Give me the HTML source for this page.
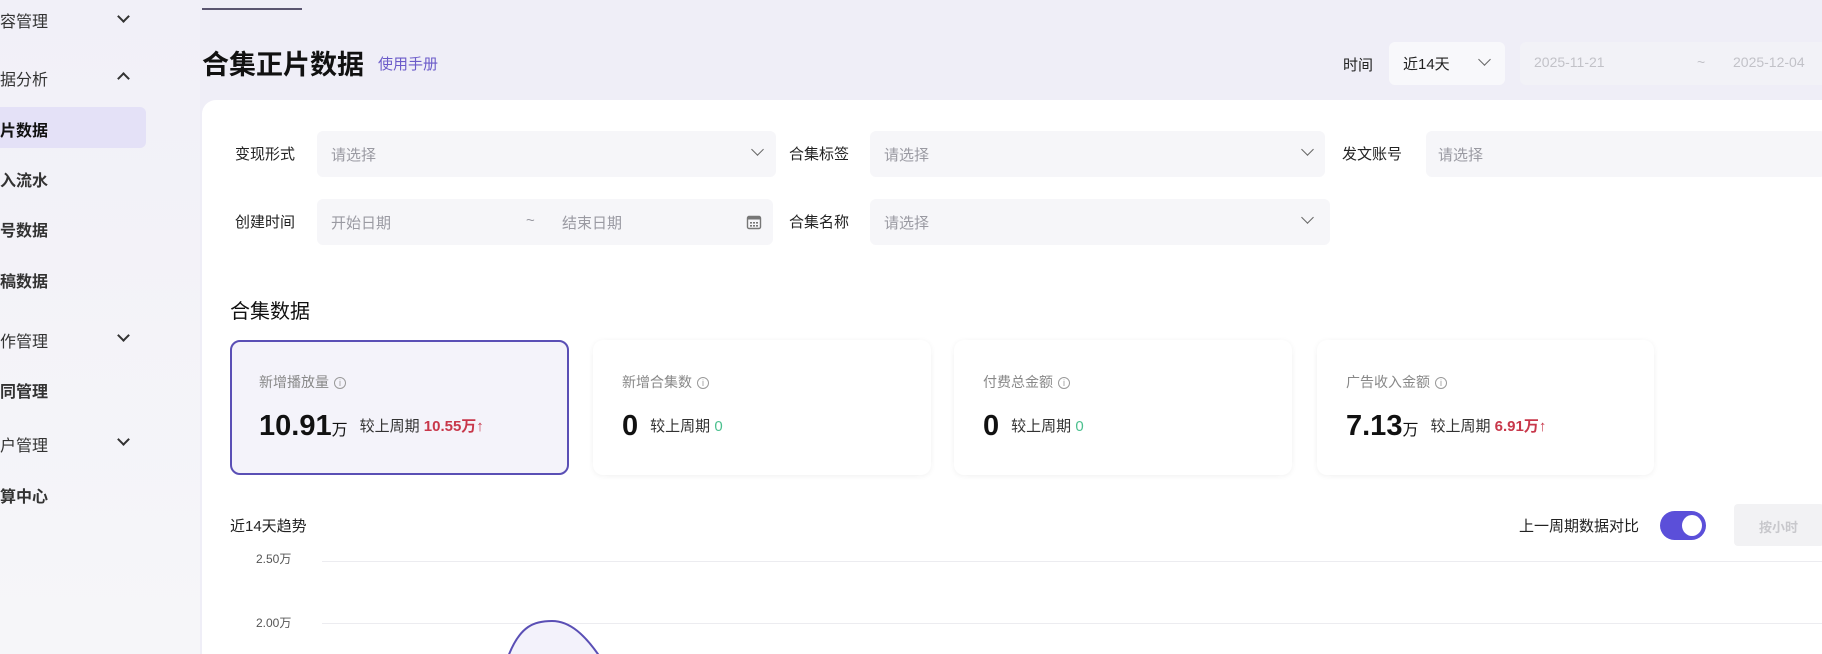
<!DOCTYPE html>
<html><head><meta charset="utf-8"><style>
*{margin:0;padding:0;box-sizing:border-box}
html,body{width:1822px;height:654px;overflow:hidden}
body{background:#efeef7;font-family:"Liberation Sans","Noto Sans CJK SC",sans-serif;color:#1d1d22;position:relative}
.a{position:absolute;white-space:nowrap}
.side{position:absolute;left:0;top:0;width:200px;height:654px;background:linear-gradient(#f1f0f8,#f6f6f9)}
.si{position:absolute;left:0;font-size:16px;color:#333}
.chev{position:absolute;left:119px;width:9px;height:9px;border-right:2px solid #333;border-bottom:2px solid #333;transform:rotate(45deg)}
.card{position:absolute;left:202px;top:100px;width:1620px;height:554px;background:#fff;border-radius:14px 0 0 0}
.lbl{font-size:15px;color:#222}
.sel{position:absolute;background:#f6f6f9;border-radius:6px;height:46px}
.ph{position:absolute;font-size:15px;color:#9a9aa2;top:13px}
.dd{position:absolute;width:9px;height:9px;border-right:1.6px solid #666;border-bottom:1.6px solid #666;transform:rotate(45deg);top:15px}
.kc{position:absolute;top:340px;height:135px;background:#fff;border-radius:10px;box-shadow:0 1px 6px rgba(0,0,0,.06)}
.kl{position:absolute;left:29px;top:32px;font-size:14px;color:#888}
.kl i{display:inline-block;width:12px;height:12px;border:1px solid #999;border-radius:50%;font-size:9px;font-style:normal;text-align:center;line-height:11px;margin-left:5px;vertical-align:1px;color:#999}
.kv{position:absolute;left:29px;top:70px;font-size:29px;font-weight:bold;color:#111}
.kv small{font-size:16px;font-weight:normal}
.kv span{font-size:15px;font-weight:normal;color:#333;margin-left:12px;vertical-align:4px}
.kv b{font-size:15px}
</style></head><body>
<div class="side">
<div class="si" style="top:8px">容管理</div><div class="chev" style="top:12px"></div>
<div class="si" style="top:66px">据分析</div><div class="chev" style="top:74px;transform:rotate(225deg)"></div>
<div style="position:absolute;left:0;top:107px;width:146px;height:41px;background:#e4e1f7;border-radius:0 6px 6px 0"></div>
<div class="si" style="top:117px;font-weight:bold;color:#111">片数据</div>
<div class="si" style="top:167px;font-weight:bold">入流水</div>
<div class="si" style="top:217px;font-weight:bold">号数据</div>
<div class="si" style="top:268px;font-weight:bold">稿数据</div>
<div class="si" style="top:328px">作管理</div><div class="chev" style="top:331px"></div>
<div class="si" style="top:378px;font-weight:bold">同管理</div>
<div class="si" style="top:432px">户管理</div><div class="chev" style="top:435px"></div>
<div class="si" style="top:483px;font-weight:bold">算中心</div>
</div>
<div class="a" style="left:202px;top:8px;width:100px;height:2px;background:#5a5570"></div>
<div class="a" style="left:202px;top:43px;font-size:27px;font-weight:bold;color:#111">合集正片数据</div>
<div class="a" style="left:378px;top:53px;font-size:15px;color:#6b5bc9">使用手册</div>
<div class="a lbl" style="left:1343px;top:54px">时间</div>
<div class="sel" style="left:1389px;top:42px;width:116px;height:43px;background:#f8f8fb"><div class="a" style="left:14px;top:11px;font-size:15px;color:#222">近14天</div><div class="dd" style="left:91px;top:13px"></div></div>
<div class="sel" style="left:1520px;top:42px;width:310px;height:43px;background:#f2f2f7"><div class="a" style="left:14px;top:12px;font-size:14px;color:#c2c2c8">2025-11-21</div><div class="a" style="left:177px;top:12px;font-size:14px;color:#c2c2c8">~</div><div class="a" style="left:213px;top:12px;font-size:14px;color:#c2c2c8">2025-12-04</div></div>
<div class="card"></div>
<div class="a lbl" style="left:235px;top:143px">变现形式</div>
<div class="sel" style="left:317px;top:131px;width:459px"><div class="ph" style="left:14px">请选择</div><div class="dd" style="left:436px;top:14px"></div></div>
<div class="a lbl" style="left:789px;top:143px">合集标签</div>
<div class="sel" style="left:870px;top:131px;width:455px"><div class="ph" style="left:14px">请选择</div><div class="dd" style="left:433px;top:14px"></div></div>
<div class="a lbl" style="left:1342px;top:143px">发文账号</div>
<div class="sel" style="left:1426px;top:131px;width:400px"><div class="ph" style="left:12px">请选择</div></div>
<div class="a lbl" style="left:235px;top:211px">创建时间</div>
<div class="sel" style="left:317px;top:199px;width:456px"><div class="ph" style="left:14px">开始日期</div><div class="ph" style="left:209px">~</div><div class="ph" style="left:245px">结束日期</div>
<svg class="a" style="left:429px;top:15px" width="16" height="16" viewBox="0 0 16 16"><rect x="1.5" y="2.5" width="13" height="12" rx="1.5" fill="none" stroke="#777" stroke-width="1.4"/><rect x="1.5" y="2.5" width="13" height="3" fill="#777"/><g fill="#777"><rect x="4" y="8" width="2" height="1.6"/><rect x="7" y="8" width="2" height="1.6"/><rect x="10" y="8" width="2" height="1.6"/><rect x="4" y="11" width="2" height="1.6"/><rect x="7" y="11" width="2" height="1.6"/><rect x="10" y="11" width="2" height="1.6"/></g></svg></div>
<div class="a lbl" style="left:789px;top:211px">合集名称</div>
<div class="sel" style="left:870px;top:199px;width:460px"><div class="ph" style="left:14px">请选择</div><div class="dd" style="left:433px;top:14px"></div></div>
<div class="a" style="left:230px;top:295px;font-size:20px;color:#111">合集数据</div>
<div class="kc" style="left:230px;width:339px;background:#f4f3fa;border:2px solid #5a4fb5;box-shadow:none"><div class="kl" style="left:27px;top:30px">新增播放量<i>i</i></div><div class="kv" style="left:27px;top:68px">10.91<small>万</small><span>较上周期 <b style="color:#c8374a">10.55万↑</b></span></div></div>
<div class="kc" style="left:593px;width:338px"><div class="kl">新增合集数<i>i</i></div><div class="kv">0<span>较上周期 <b style="color:#4cc08f;font-weight:normal">0</b></span></div></div>
<div class="kc" style="left:954px;width:338px"><div class="kl">付费总金额<i>i</i></div><div class="kv">0<span>较上周期 <b style="color:#4cc08f;font-weight:normal">0</b></span></div></div>
<div class="kc" style="left:1317px;width:337px"><div class="kl">广告收入金额<i>i</i></div><div class="kv">7.13<small>万</small><span>较上周期 <b style="color:#c8374a">6.91万↑</b></span></div></div>
<div class="a" style="left:230px;top:515px;font-size:15px;color:#222">近14天趋势</div>
<div class="a" style="left:1519px;top:515px;font-size:15px;color:#222">上一周期数据对比</div>
<div class="a" style="left:1660px;top:511px;width:46px;height:29px;border-radius:15px;background:#5b4fd9"><div class="a" style="left:22px;top:4px;width:20px;height:21px;border-radius:50%;background:#fff"></div></div>
<div class="a" style="left:1734px;top:504px;width:90px;height:42px;background:#f2f2f4;border-radius:4px"><div class="a" style="left:25px;top:13px;font-size:13px;color:#c8c8cc;font-weight:bold">按小时</div></div>
<div class="a" style="left:256px;top:550px;font-size:12px;color:#555">2.50万</div>
<div class="a" style="left:256px;top:614px;font-size:12px;color:#555">2.00万</div>
<div class="a" style="left:322px;top:561px;width:1500px;height:1px;background:#ececf0"></div>
<div class="a" style="left:322px;top:623px;width:1500px;height:1px;background:#ececf0"></div>
<svg class="a" style="left:500px;top:615px" width="110" height="39"><path d="M8 42 C20 10 35 6 52 6 C70 6 85 20 100 42" fill="#f3f2fb" stroke="#5a4fb5" stroke-width="2"/></svg>
</body></html>
